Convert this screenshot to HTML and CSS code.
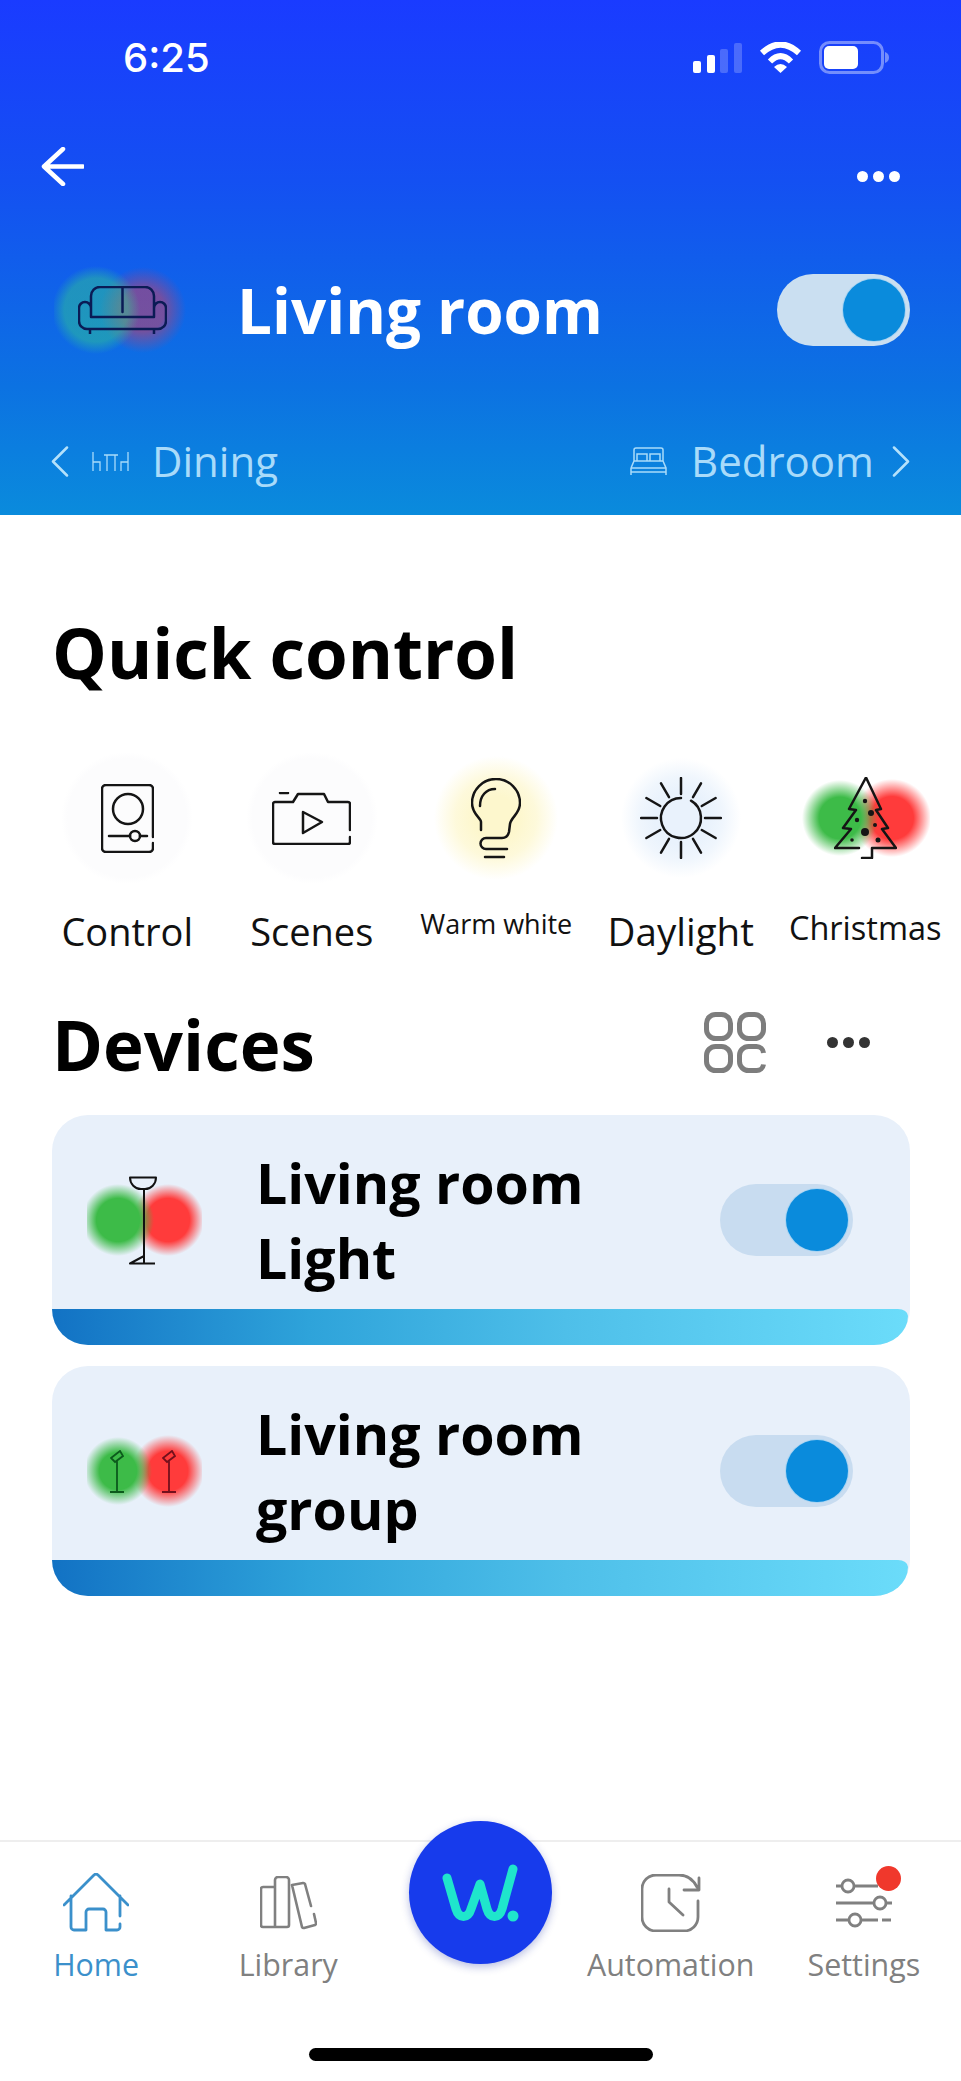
FILE: index.html
```html
<!DOCTYPE html>
<html lang="en">
<head>
<meta charset="utf-8">
<title>Living room</title>
<link rel="stylesheet" href="styles.css">
</head>
<body>
<div class="app">
  <header class="hero">
    <div class="status">
      <span class="time">6:25</span>
      <div class="status-icons">
        <svg class="signal" width="49" height="30" viewBox="0 0 49 30"><rect x="0" y="18" width="8" height="12" rx="2" fill="#fff"/><rect x="14" y="12" width="8" height="18" rx="2" fill="#fff"/><rect x="27" y="6" width="8" height="24" rx="2" fill="#fff" opacity=".22"/><rect x="41" y="0" width="8" height="30" rx="2" fill="#fff" opacity=".22"/></svg>
        <svg class="wifi" width="43" height="31" viewBox="0 0 43 31"><path d="M3 11Q21.500-6 40 11" fill="none" stroke="#fff" stroke-width="6"/><path d="M11 19.500Q21.500 9 32 19.500" fill="none" stroke="#fff" stroke-width="6"/><path d="M15 25Q21.500 19 28 25L21.500 31Z" fill="#fff"/></svg>
        <svg class="battery" width="71" height="33" viewBox="0 0 71 33"><rect x="1.500" y="1.500" width="62" height="30" rx="9" fill="none" stroke="#fff" stroke-opacity=".4" stroke-width="3"/><rect x="5" y="5" width="34" height="23" rx="5" fill="#fff"/><path d="M66 11C69 12 70 14 70 16.500S69 21 66 22Z" fill="#fff" fill-opacity=".4"/></svg>
      </div>
    </div>
    <div class="topbar">
      <svg width="43" height="39" viewBox="0 0 43 39"><path d="M22 2L3 19.500L22 37M3 19.500H42" fill="none" stroke="#fff" stroke-width="4.500" stroke-linecap="round" stroke-linejoin="round"/></svg>
      <div class="dots dots-light"><i></i><i></i><i></i></div>
    </div>
    <div class="room">
      <div class="room-icon">
        <svg width="89" height="48" viewBox="0 0 89 48"><path d="M13 22V10a9 9 0 0 1 9-9H67a9 9 0 0 1 9 9V22M44.500 1V26M13 22a6 6 0 0 0-12 0V35a8 8 0 0 0 8 8H80a8 8 0 0 0 8-8V22a6 6 0 0 0-12 0V31H13V22M12 43V48M76 43V48" fill="none" stroke="#0a1b55" stroke-width="2.500" stroke-linecap="round" stroke-linejoin="round"/></svg>
      </div>
      <h1 class="room-title">Living room</h1>
      <div class="switch switch-hero"><span class="knob"></span></div>
    </div>
    <nav class="room-nav">
      <div class="room-link">
        <svg width="18" height="31" viewBox="0 0 18 31"><path d="M16 1.500L2 15.500L16 29.500" fill="none" stroke="#b4e1fb" stroke-width="2.500" stroke-linecap="round" stroke-linejoin="round"/></svg>
        <svg class="table" width="37" height="21" viewBox="0 0 37 21"><path d="M1 1V20M1 11H8V20M12 4H26M15 4V20M23 4V20M36 1V20M36 11H29V20" fill="none" stroke="#a9dbfa" stroke-width="1.300"/></svg>
        <span>Dining</span>
      </div>
      <div class="room-link">
        <svg class="bed" width="37" height="29" viewBox="0 0 37 29"><path d="M4 14V3a2 2 0 0 1 2-2H31a2 2 0 0 1 2 2V14M7 14V7H17V14M20 14V7H30V14M1 21L4 14H33L36 21V28M1 21V28M1 21H36M1 25H36" fill="none" stroke="#a9dbfa" stroke-width="1.500"/></svg>
        <span>Bedroom</span>
        <svg width="18" height="31" viewBox="0 0 18 31"><path d="M2 1.500L16 15.500L2 29.500" fill="none" stroke="#b4e1fb" stroke-width="2.500" stroke-linecap="round" stroke-linejoin="round"/></svg>
      </div>
    </nav>
  </header>

  <main class="content">
    <h2 class="section-title quick-title">Quick control</h2>
    <div class="quick-row">
      <div class="quick">
        <div class="tile tile-plain">
          <svg class="ink" width="53" height="69" viewBox="0 0 53 69"><path d="M52 53V5a4 4 0 0 0-4-4H5a4 4 0 0 0-4 4V64a4 4 0 0 0 4 4H48a4 4 0 0 0 4-4V59"/><circle cx="27" cy="25" r="15"/><path d="M8 52H29M39 52H46"/><circle cx="34" cy="52" r="5"/></svg>
        </div>
        <span class="label label-lg">Control</span>
      </div>
      <div class="quick">
        <div class="tile tile-plain">
          <svg class="ink" width="79" height="53" viewBox="0 0 79 53"><path d="M78 38V12a2 2 0 0 0-2-2H56L52 2H26L21 10H3a2 2 0 0 0-2 2V50a2 2 0 0 0 2 2H76a2 2 0 0 0 2-2V45M8 1H16"/><path d="M31 20L50 30L31 41Z"/></svg>
        </div>
        <span class="label label-lg">Scenes</span>
      </div>
      <div class="quick">
        <div class="tile tile-warm">
          <svg class="ink" width="50" height="81" viewBox="0 0 50 81"><path d="M10 52V44C10 40 1 36 1 25A24 24 0 0 1 49 25C49 36 40 39 39 46L38 54C37 58 35 60 31 60H15A5.500 5.500 0 0 0 15 71H36M14 79H33M24 11C15 11 9 18 9 28"/></svg>
        </div>
        <span class="label label-sm">Warm white</span>
      </div>
      <div class="quick">
        <div class="tile tile-day">
          <svg class="ink" width="82" height="82" viewBox="-41 -41 82 82"><path d="M10-17.300A20 20 0 1 1 0-20"/><g><path d="M0-24V-40"/><path d="M0-24V-40" transform="rotate(30)"/><path d="M0-24V-40" transform="rotate(60)"/><path d="M0-24V-40" transform="rotate(90)"/><path d="M0-24V-40" transform="rotate(120)"/><path d="M0-24V-40" transform="rotate(150)"/><path d="M0-24V-40" transform="rotate(180)"/><path d="M0-24V-40" transform="rotate(210)"/><path d="M0-24V-40" transform="rotate(240)"/><path d="M0-24V-40" transform="rotate(270)"/><path d="M0-24V-40" transform="rotate(300)"/><path d="M0-24V-40" transform="rotate(330)"/></g></svg>
        </div>
        <span class="label label-lg label-wide">Daylight</span>
      </div>
      <div class="quick">
        <div class="tile tile-pair">
          <svg class="ink" width="63" height="82" viewBox="0 0 63 82"><path d="M28 81H38V71H62L48 52L54 51L42 33L47 32L32 0.500L15 32L22 33L9 51L17 52L1 71H25"/><g class="ink-fill"><circle cx="31" cy="24" r="2.200"/><circle cx="37" cy="36" r="3"/><circle cx="23" cy="43" r="2.200"/><circle cx="41" cy="48" r="2"/><circle cx="31" cy="55" r="4"/><circle cx="18" cy="63" r="1.800"/><circle cx="44" cy="63" r="2.500"/></g></svg>
        </div>
        <span class="label label-md">Christmas</span>
      </div>
    </div>

    <div class="devices-head">
      <h2 class="section-title">Devices</h2>
      <div class="devices-actions">
        <svg width="62" height="61" viewBox="0 0 62 61"><g fill="none" stroke="#7d7d7d" stroke-width="5"><rect x="2.500" y="2.500" width="24" height="24" rx="9"/><rect x="35.500" y="2.500" width="24" height="24" rx="9"/><rect x="2.500" y="34.500" width="24" height="24" rx="9"/><path d="M59.500 41a7 7 0 0 0-7-6.500H44.500a9 9 0 0 0-9 9V49.500a9 9 0 0 0 9 9H52.500a7 7 0 0 0 7-6"/></g></svg>
        <div class="dots dots-dark"><i></i><i></i><i></i></div>
      </div>
    </div>

    <article class="card">
      <div class="card-body">
        <div class="device-icon device-icon-single">
          <svg width="28" height="89" viewBox="0 0 28 89"><path d="M1 1.500H27C27 8 22 13 16 13H12C6 13 1 8 1 1.500ZM15 13V80L1 87.500H26M15 80V87" fill="none" stroke="#111" stroke-width="2" stroke-linejoin="round"/></svg>
        </div>
        <h3 class="device-name">Living room<br>Light</h3>
        <div class="switch"><span class="knob"></span></div>
      </div>
      <div class="card-bar"></div>
    </article>

    <article class="card">
      <div class="card-body">
        <div class="device-icon device-icon-pair">
          <svg width="14" height="43" viewBox="0 0 14 43"><path d="M1 8L10 1L13 6L5 12ZM7 10V41M0 42H14" fill="none" stroke="#0c5a1c" stroke-width="1.800"/></svg>
          <svg width="14" height="43" viewBox="0 0 14 43"><path d="M1 8L10 1L13 6L5 12ZM7 10V41M0 42H14" fill="none" stroke="#74101c" stroke-width="1.800"/></svg>
        </div>
        <h3 class="device-name">Living room<br>group</h3>
        <div class="switch"><span class="knob"></span></div>
      </div>
      <div class="card-bar"></div>
    </article>
  </main>

  <footer class="tabbar">
    <div class="tab tab-active">
      <div class="tab-icon">
        <svg width="66" height="60" viewBox="0 0 66 60"><path d="M1 32L31 2a3 3 0 0 1 4 0L65 32M8 23V54a3 3 0 0 0 3 3H23V39a3 3 0 0 1 3-3H40a3 3 0 0 1 3 3V57H54a3 3 0 0 0 3-3V51M57 43V23" fill="none" stroke="#3b90cb" stroke-width="2.800" stroke-linecap="round" stroke-linejoin="round"/></svg>
      </div>
      <span>Home</span>
    </div>
    <div class="tab">
      <div class="tab-icon">
        <svg width="57" height="54" viewBox="0 0 57 54"><path d="M15 11H3a2 2 0 0 0-2 2V49a2 2 0 0 0 2 2H27a2 2 0 0 0 2-2V4a3 3 0 0 0-3-3H18a3 3 0 0 0-3 3V51M32 9L43 7a2 2 0 0 1 2 1L51 30M54 38L56 47a2 2 0 0 1-1 2L44 52a2 2 0 0 1-2-1L32 9" fill="none" stroke="#808080" stroke-width="2.600" stroke-linecap="round" stroke-linejoin="round"/></svg>
      </div>
      <span>Library</span>
    </div>
    <div class="fab-cell">
      <div class="fab">
        <svg width="143" height="143" viewBox="0 0 143 143"><path d="M38 57L47 88C50 98 59 98 62 88L71 63L78 88C81 98 90 98 93 88L104 48" fill="none" stroke="#1fe6cc" stroke-width="9" stroke-linecap="round" stroke-linejoin="round"/><circle cx="104" cy="95" r="5.500" fill="#1fe6cc"/></svg>
      </div>
    </div>
    <div class="tab tab-auto">
      <div class="tab-icon">
        <svg width="60" height="58" viewBox="0 0 60 58"><path d="M43 16H58V4M57 27V43A14 14 0 0 1 43 57H15A14 14 0 0 1 1 43V15A14 14 0 0 1 15 1H38C46 1 52 5 56 13M28 15V28L42 41" fill="none" stroke="#808080" stroke-width="2.800" stroke-linecap="round" stroke-linejoin="round"/></svg>
      </div>
      <span>Automation</span>
    </div>
    <div class="tab tab-settings">
      <div class="tab-icon">
        <div class="settings-icon">
          <svg width="56" height="51" viewBox="0 0 56 51"><g fill="none" stroke="#808080" stroke-width="2.800"><path d="M0 8H6M18 8H42M0 25H38M50 25H56M0 42H13M25 42H42M46 42H55"/><circle cx="12" cy="8" r="6"/><circle cx="44" cy="25" r="6"/><circle cx="19" cy="42" r="6"/></g></svg>
          <span class="badge"></span>
        </div>
      </div>
      <span>Settings</span>
    </div>
    <div class="home-indicator"></div>
  </footer>
</div>
</body>
</html>
```
FILE: styles.css
```css
* { box-sizing: border-box; }
html, body { margin: 0; padding: 0; background: #fff; }
body { font-family: "Open Sans", "Noto Sans", sans-serif; color: #000; }
h1, h2, h3 { margin: 0; }
svg { display: block; flex: none; }

.app { width: 961px; height: 2081px; display: flex; flex-direction: column; overflow: hidden; }

/* Header */
.hero { height: 515px; flex: none; padding-top: 41px; background: linear-gradient(180deg, #1a3bff 0%, #1450f2 35%, #0c72e2 75%, #0a8bdc 100%); }
.status { height: 33px; display: flex; justify-content: space-between; align-items: center; padding: 0 71px 0 123px; }
.time { font-family: Inter, "Liberation Sans", sans-serif; font-weight: 500; font-size: 40px; line-height: 33px; color: #fff; }
.status-icons { display: flex; align-items: flex-end; }
.signal { margin-right: 17px; margin-bottom: 1px; }
.wifi { margin-right: 17px; margin-bottom: 1px; }

.topbar { display: flex; justify-content: space-between; margin-top: 73px; height: 39px; padding: 0 61px 0 41px; }
.dots { display: flex; gap: 5px; }
.dots i { display: block; border-radius: 50%; }
.dots-light { margin-top: 24px; height: 11px; }
.dots-light i { width: 11px; height: 11px; background: #fff; }
.dots-dark i { width: 11px; height: 11px; background: #333; }

.room { display: flex; align-items: center; height: 80px; margin-top: 84px; padding: 0 51px 0 54px; }
.room-icon { width: 132px; height: 100px; flex: none; display: flex; align-items: center; justify-content: center; padding-left: 5px; margin-right: 51px;
  background:
    radial-gradient(circle 44px at 42px 50%, rgba(50, 205, 140, .46) 72%, rgba(50, 205, 140, 0) 100%),
    radial-gradient(circle 43px at 89px 50%, rgba(255, 50, 60, .42) 50%, rgba(255, 50, 60, 0) 100%); }
.room-title { flex: 1; font-size: 62px; font-weight: 700; line-height: 80px; color: #fff; }

.switch { width: 133px; height: 72px; flex: none; border-radius: 36px; background: #c8dcf0; display: flex; align-items: center; justify-content: flex-end; padding-right: 5px; }
.knob { display: block; width: 62px; height: 62px; border-radius: 50%; background: #0a8bdc; box-shadow: 0 0 0 1px #a9d4f2; }
.switch-hero { background: #cadff1; }

.room-nav { display: flex; justify-content: space-between; align-items: center; height: 40px; margin-top: 91px; padding: 0 51px 0 51px; color: #a9dbfa; font-size: 42px; line-height: 40px; }
.room-link { display: flex; align-items: center; }
.table { margin: 0 23px 0 23px; }
.bed { margin-right: 24px; }
.room-link span + svg { margin-left: 18px; }

/* Content */
.content { flex: 1; padding: 0 51px 0 52px; display: flex; flex-direction: column; }
.section-title { font-size: 69px; font-weight: 700; line-height: 80px; }
.quick-title { margin-top: 97px; }

.quick-row { display: grid; grid-template-columns: repeat(5, 184.500px); margin: 61px -51px 0 -17px; }
.quick { height: 220px; display: flex; flex-direction: column; align-items: center; white-space: nowrap; }
.tile { width: 130px; height: 130px; flex: none; display: flex; align-items: center; justify-content: center; }
.tile-plain { background: radial-gradient(circle 66px, #fcfcfd 90%, rgba(252, 252, 253, 0) 100%); }
.tile-warm { background: radial-gradient(circle 62px, #fdf7cd 35%, rgba(253, 247, 205, .72) 65%, rgba(253, 247, 205, 0) 100%); }
.tile-day { background: radial-gradient(circle 60px, #e9f2fc 45%, rgba(233, 242, 252, .7) 70%, rgba(233, 242, 252, 0) 100%); }
.tile-pair {
  background:
    radial-gradient(circle 38px at 40px 50%, #3dbb48 55%, rgba(61, 187, 72, 0) 100%),
    radial-gradient(circle 39px at 92px 50%, #ff3b3b 55%, rgba(255, 59, 59, 0) 100%); }
.ink { fill: none; stroke: #151515; stroke-width: 2.500; stroke-linecap: round; stroke-linejoin: round; }
.ink-fill { fill: #151515; stroke: none; }

.label { color: #111; }
.label-lg { font-size: 38px; line-height: 50px; margin-top: 23px; }
.label-wide { font-size: 38.500px; }
.label-sm { font-size: 27px; line-height: 36px; margin-top: 23px; }
.label-md { font-size: 32.500px; line-height: 44px; margin-top: 23px; }

.devices-head { display: flex; align-items: center; justify-content: space-between; height: 80px; margin-top: 31px; padding-right: 40px; }
.devices-actions { display: flex; align-items: center; gap: 61px; margin-top: -3px; }

.card { height: 230px; flex: none; margin-top: 21px; border-radius: 36px; background: #e8f0fa; display: flex; flex-direction: column; }
.devices-head + .card { margin-top: 31px; }
.card-body { flex: 1; display: flex; align-items: center; padding: 16px 57px 0 35px; }
.card-bar { height: 36px; flex: none; margin-right: 2px; border-radius: 0 10px 34px 36px / 0 7px 29px 36px; background: linear-gradient(90deg, #1272c4 0%, #2ea3da 30%, #4ebfe9 60%, #6bdcfa 100%); }

.device-icon { width: 115px; height: 90px; flex: none; margin-right: 54px; display: flex; align-items: center; }
.device-icon-single { padding-left: 42px;
  background:
    radial-gradient(circle 36px at 31px 50%, #3dbb48 60%, rgba(61, 187, 72, 0) 100%),
    radial-gradient(circle 36px at 81px 50%, #ff3b3b 60%, rgba(255, 59, 59, 0) 100%); }
.device-icon-pair { gap: 38px; padding-left: 23px;
  background:
    radial-gradient(circle 34px at 31px 50%, #3dbb48 55%, rgba(61, 187, 72, 0) 100%),
    radial-gradient(circle 36px at 81px 50%, #ff3b3b 55%, rgba(255, 59, 59, 0) 100%); }
.device-name { flex: 1; font-size: 55.500px; font-weight: 700; line-height: 75px; }

/* Tab bar */
.tabbar { height: 241px; flex: none; position: relative; border-top: 2px solid #eeeeee; display: grid; grid-template-columns: repeat(5, 1fr); color: #808080; font-size: 30.400px; }
.tab { display: flex; flex-direction: column; align-items: center; padding-top: 31px; height: 144px; }
.tab-icon { height: 60px; display: flex; align-items: center; justify-content: center; }
.tab > span { line-height: 40px; margin-top: 12px; }
.tab-active { color: #3b90cb; }
.tab-auto { margin-right: 4px; }
.tab-settings { margin-right: 2px; }
.settings-icon { position: relative; }
.badge { position: absolute; right: -9px; top: -12px; width: 25px; height: 25px; border-radius: 50%; background: #f0382c; }
.fab-cell { display: flex; justify-content: center; align-items: flex-start; }
.fab { width: 143px; height: 143px; margin-top: -21px; border-radius: 50%; background: #173bec; box-shadow: 0 3px 8px rgba(20, 40, 160, .3); }
.home-indicator { position: absolute; left: 309px; top: 206px; width: 344px; height: 13px; border-radius: 7px; background: #000; }
```
